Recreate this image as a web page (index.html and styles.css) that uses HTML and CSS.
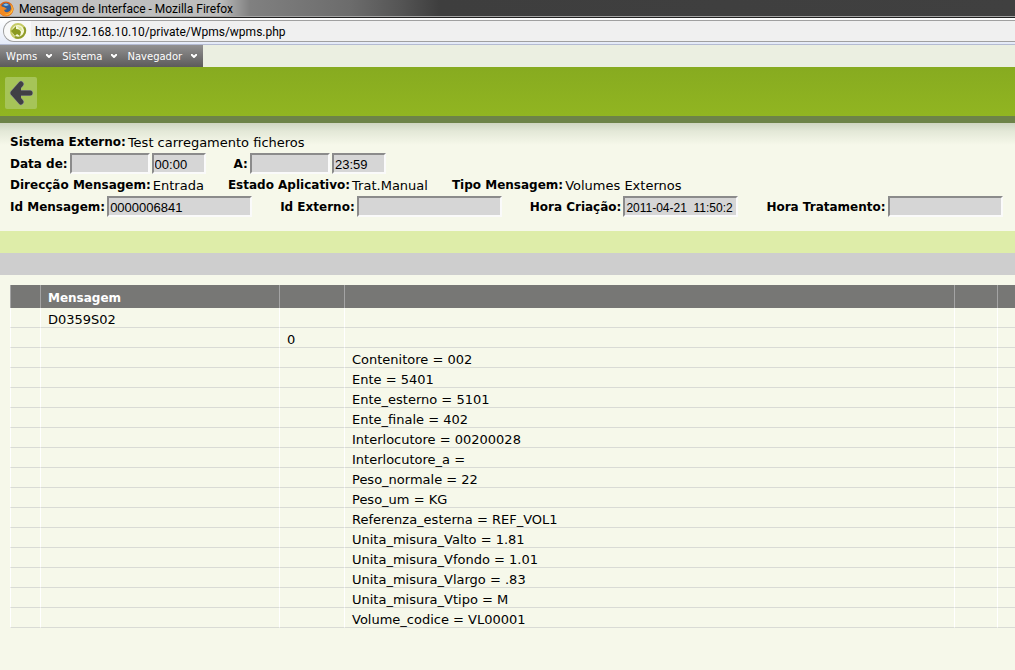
FILE: index.html
```html
<!DOCTYPE html>
<html lang="pt">
<head>
    <meta charset="utf-8">
    <meta name="viewport" content="width=device-width,initial-scale=1.0">
    <title>Mensagem de Interface</title>
    <link rel="stylesheet" href="styles.css">
</head>
<body>
    <div class="titlebar">
        <svg class="firefox" viewBox="0 0 14 16">
            <circle cx="6" cy="8" r="7.5" fill="#d9641a"/>
            <circle cx="6" cy="7" r="5" fill="#2f5f9e"/>
            <path d="M3 4q3-3 6 0l-3 1z" fill="#8ac4e8"/>
            <path d="M0 3q1 3 4 3l3 2-3 1q1 3 4 2 4-1 3-6l-1-3q5 4 3 8-2 5-7 5-5 0-7-5z" fill="#f08a24"/>
            <path d="M10 3q4 5 0 9-3 2-6 1 5 2 8-2 2-4-2-8z" fill="#fcd34a"/>
        </svg>
        <span class="title">Mensagem de Interface - Mozilla Firefox</span>
    </div>
    <div class="navbar">
        <div class="address">
            <span class="site">
                <svg viewBox="0 0 18 18">
                    <circle cx="9" cy="9" r="7" fill="#f7f8dc" stroke="#c6cb66" stroke-width="2"/>
                    <path d="M15 5a7 7 0 0 1-9 10" fill="none" stroke="#8f9c2c" stroke-width="2"/>
                    <path d="M2 9l5-5v3q4 0 5 3l-1 4-3-2-2 2z" fill="#8b9a20"/>
                    <path d="M8 4l4 1 2 4-3-1z" fill="#dfe79a"/>
                </svg>
            </span>
            <input class="url" type="text" aria-label="URL" value="http://192.168.10.10/private/Wpms/wpms.php">
        </div>
    </div>
    <div class="menubar">
        <nav class="menu">
            <button type="button">Wpms <svg viewBox="0 0 6 4"><path d="M0 0l3 3 3-3"/></svg></button>
            <button type="button">Sistema <svg viewBox="0 0 6 4"><path d="M0 0l3 3 3-3"/></svg></button>
            <button type="button">Navegador <svg viewBox="0 0 6 4"><path d="M0 0l3 3 3-3"/></svg></button>
        </nav>
    </div>
    <div class="toolbar">
        <button class="back" type="button" aria-label="Voltar">
            <svg viewBox="0 0 32 32">
                <path d="M8 16l8-9M8 16l8 9M8 16h17" fill="none" stroke="#8f9490" stroke-width="6" stroke-linecap="round"/>
                <path d="M8 16l8-9M8 16l8 9M8 16h17" fill="none" stroke="#414045" stroke-width="5" stroke-linecap="round"/>
                <path d="M6 16l10-9v18z" fill="#414045"/>
            </svg>
        </button>
    </div>

    <form class="filters">
        <div class="row">
            <div class="field"><b>Sistema Externo:</b><span>Test carregamento ficheros</span></div>
        </div>
        <div class="row inputs">
            <div class="field">
                <label for="data-de">Data de:</label>
                <input class="date" id="data-de" type="text">
                <input class="time" type="text" aria-label="Hora de" value="00:00">
            </div>
            <div class="field">
                <label for="data-a">A:</label>
                <input class="date" id="data-a" type="text">
                <input class="time" type="text" aria-label="Hora a" value="23:59">
            </div>
        </div>
        <div class="row">
            <div class="field"><b>Direcção Mensagem:</b><span>Entrada</span></div>
            <div class="field"><b>Estado Aplicativo:</b><span>Trat.Manual</span></div>
            <div class="field"><b>Tipo Mensagem:</b><span>Volumes Externos</span></div>
        </div>
        <div class="row inputs">
            <div class="field">
                <label for="id-mensagem">Id Mensagem:</label>
                <input class="id" id="id-mensagem" type="text" value="0000006841">
            </div>
            <div class="field">
                <label for="id-externo">Id Externo:</label>
                <input class="id" id="id-externo" type="text">
            </div>
            <div class="field">
                <label for="hora-criacao">Hora Criação:</label>
                <input class="stamp" id="hora-criacao" type="text" value="2011-04-21  11:50:2">
            </div>
            <div class="field">
                <label for="hora-tratamento">Hora Tratamento:</label>
                <input class="stamp" id="hora-tratamento" type="text">
            </div>
        </div>
    </form>

    <div class="bar green"></div>
    <div class="bar gray"></div>

    <div class="grid">
        <table>
            <colgroup>
                <col class="c-mark"><col class="c-msg"><col class="c-num"><col><col class="c-opt"><col class="c-end">
            </colgroup>
            <thead>
                <tr><th></th><th>Mensagem</th><th></th><th></th><th></th><th></th></tr>
            </thead>
            <tbody>
                <tr><td></td><td>D0359S02</td><td></td><td></td><td></td><td></td></tr>
                <tr><td></td><td></td><td>0</td><td></td><td></td><td></td></tr>
                <tr><td></td><td></td><td></td><td>Contenitore = 002</td><td></td><td></td></tr>
                <tr><td></td><td></td><td></td><td>Ente = 5401</td><td></td><td></td></tr>
                <tr><td></td><td></td><td></td><td>Ente_esterno = 5101</td><td></td><td></td></tr>
                <tr><td></td><td></td><td></td><td>Ente_finale = 402</td><td></td><td></td></tr>
                <tr><td></td><td></td><td></td><td>Interlocutore = 00200028</td><td></td><td></td></tr>
                <tr><td></td><td></td><td></td><td>Interlocutore_a =</td><td></td><td></td></tr>
                <tr><td></td><td></td><td></td><td>Peso_normale = 22</td><td></td><td></td></tr>
                <tr><td></td><td></td><td></td><td>Peso_um = KG</td><td></td><td></td></tr>
                <tr><td></td><td></td><td></td><td>Referenza_esterna = REF_VOL1</td><td></td><td></td></tr>
                <tr><td></td><td></td><td></td><td>Unita_misura_Valto = 1.81</td><td></td><td></td></tr>
                <tr><td></td><td></td><td></td><td>Unita_misura_Vfondo = 1.01</td><td></td><td></td></tr>
                <tr><td></td><td></td><td></td><td>Unita_misura_Vlargo = .83</td><td></td><td></td></tr>
                <tr><td></td><td></td><td></td><td>Unita_misura_Vtipo = M</td><td></td><td></td></tr>
                <tr><td></td><td></td><td></td><td>Volume_codice = VL00001</td><td></td><td></td></tr>
            </tbody>
        </table>
    </div>
</body>
</html>
```
FILE: styles.css
```css
* {
    box-sizing: border-box;
}

body {
    margin: 0;
    background: #f6f8ea;
    color: #000;
    font-family: Verdana, "DejaVu Sans", sans-serif;
    font-size: 13px;
}

button, input {
    margin: 0;
    border: none;
    font-family: inherit;
}

/* browser window */
.titlebar {
    display: flex;
    align-items: center;
    height: 18px;
    border-bottom: 1px solid #222;
    box-shadow: inset 0 -1px #a5a5a5;
    background: linear-gradient(to right, #c4c4c4 0, #bcbcbc 220px, #808080 250px, #6c6c6c 350px, #555 400px, #3e3e3e 440px, #404040 100%);
    overflow: hidden;
}

.firefox {
    width: 14px;
    height: 16px;
    margin-right: 5px;
}

.title {
    font-family: "Segoe UI", Roboto, sans-serif;
    font-size: 12px;
    line-height: 16px;
    white-space: nowrap;
}

.navbar {
    height: 27px;
    padding: 2px 0 2px 3px;
    background: linear-gradient(#fff, #e4eaf8);
    border-bottom: 1px solid #b4bbd2;
}

.address {
    display: flex;
    height: 22px;
    border: 1px solid #a0a0a0;
    border-right: none;
    border-radius: 11px 0 0 11px;
    background: #f0f0f0;
    overflow: hidden;
}

.site {
    width: 27px;
    padding: 1px 5px;
    background: #f9f9f9;
}

.site svg {
    display: block;
    width: 18px;
    height: 18px;
}

.url {
    flex: 1;
    min-width: 0;
    padding: 2px 4px 0;
    background: none;
    color: #000;
    font-family: "Segoe UI", Roboto, sans-serif;
    font-size: 12px;
}

/* application header */
.menubar {
    display: flex;
    height: 22px;
    background: #ebefe1;
}

.menu {
    display: flex;
    gap: 10px;
    padding: 0 6px;
    background: linear-gradient(#929191, #5c5b5a);
}

.menu button {
    display: flex;
    align-items: center;
    gap: 9px;
    padding: 0;
    background: none;
    color: #fff;
    font-size: 10px;
}

.menu svg {
    width: 6px;
    height: 4px;
    fill: none;
    stroke: #fff;
    stroke-width: 2;
}

.toolbar {
    height: 56px;
    padding: 10px 5px;
    background: linear-gradient(#87ab20, #91b521);
    border-bottom: 7px solid #6d8348;
}

.back {
    display: block;
    width: 32px;
    height: 32px;
    padding: 0;
    border-radius: 2px;
    background: #a6c458;
}

.back svg {
    display: block;
}

/* message details */
.filters {
    padding: 9px 10px 13px;
    background: linear-gradient(#cfd5c1, #e3e8d7 8px, #f6f8ea 22px);
}

.row {
    display: flex;
    gap: 24px;
    line-height: 21px;
    white-space: nowrap;
}

.row.inputs {
    gap: 28px;
    height: 22px;
    line-height: 23px;
}

.field {
    display: flex;
    gap: 2px;
}

.field b, label {
    font-size: 12px;
    font-weight: bold;
}

.field input {
    height: 21px;
    padding: 2px 0 0 1px;
    border: 2px solid;
    border-color: #8b8b8b #fafafa #fafafa #8b8b8b;
    background: #d6d6d6;
    color: #000;
    font-family: Arial, "Liberation Sans", sans-serif;
    font-size: 13px;
    white-space: pre;
}

.field .date {
    width: 80px;
}

.field .time {
    width: 54px;
}

.field .id {
    width: 145px;
}

.field .stamp {
    width: 115px;
    font-size: 12px;
}

.bar {
    height: 22px;
}

.bar.green {
    background: #deeda9;
}

.bar.gray {
    background: #cecece;
}

/* message contents */
.grid {
    padding: 10px 0 0 10px;
}

table {
    width: 100%;
    table-layout: fixed;
    border-collapse: separate;
    border-spacing: 0;
}

.c-mark {
    width: 30px;
}

.c-msg {
    width: 239px;
}

.c-num {
    width: 65px;
}

.c-opt {
    width: 43px;
}

.c-end {
    width: 18px;
}

th, td {
    height: 20px;
    padding: 4px 7px 0;
    border-left: 1px solid #fff;
    border-bottom: 1px solid #d9dbd5;
    line-height: 15px;
    text-align: left;
    white-space: nowrap;
}

th {
    height: 23px;
    border-left-color: #a4a4a4;
    border-bottom: none;
    background: #777775;
    color: #fff;
    font-size: 12px;
}
```
